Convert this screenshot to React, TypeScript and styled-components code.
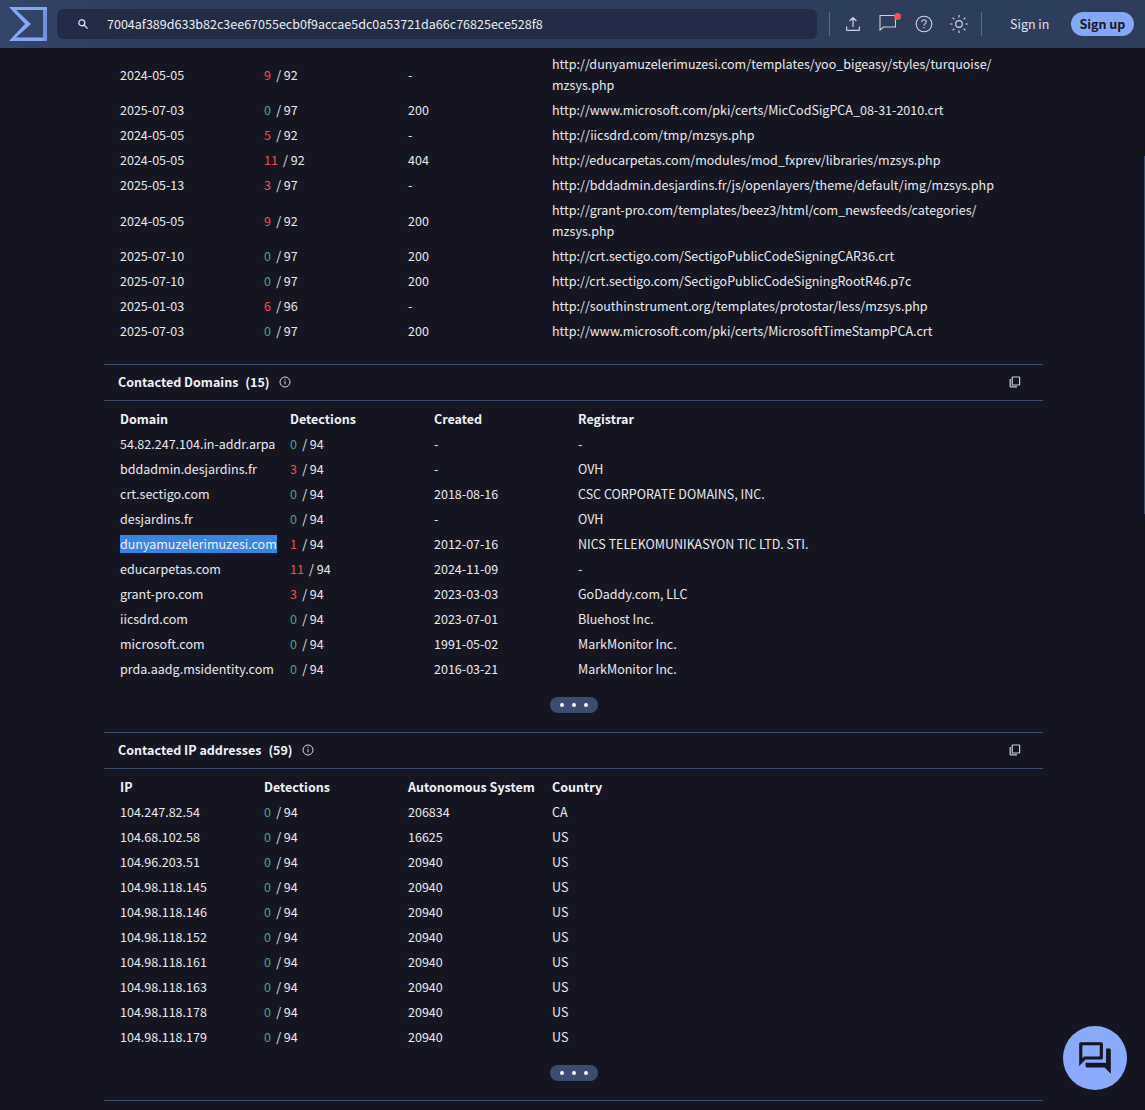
import React from "react";
import styled, { createGlobalStyle } from "styled-components";
import { MdOutlineQuestionAnswer } from "react-icons/md";

const GlobalStyle = createGlobalStyle`
  html, body {
    margin: 0;
    padding: 0;
    background: #161623;
    overflow: hidden;
  }
  body {
    font-family: "Noto Sans CJK JP", "Noto Sans", sans-serif;
    font-size: 12.52px;
    color: #e9e9ee;
  }
`;

type Detection = { hits: number; total: number };

const urls: [string, Detection, string, string][] = [
  ["2024-05-05", { hits: 9, total: 92 }, "-", "http://dunyamuzelerimuzesi.com/templates/yoo_bigeasy/styles/turquoise/\nmzsys.php"],
  ["2025-07-03", { hits: 0, total: 97 }, "200", "http://www.microsoft.com/pki/certs/MicCodSigPCA_08-31-2010.crt"],
  ["2024-05-05", { hits: 5, total: 92 }, "-", "http://iicsdrd.com/tmp/mzsys.php"],
  ["2024-05-05", { hits: 11, total: 92 }, "404", "http://educarpetas.com/modules/mod_fxprev/libraries/mzsys.php"],
  ["2025-05-13", { hits: 3, total: 97 }, "-", "http://bddadmin.desjardins.fr/js/openlayers/theme/default/img/mzsys.php"],
  ["2024-05-05", { hits: 9, total: 92 }, "200", "http://grant-pro.com/templates/beez3/html/com_newsfeeds/categories/\nmzsys.php"],
  ["2025-07-10", { hits: 0, total: 97 }, "200", "http://crt.sectigo.com/SectigoPublicCodeSigningCAR36.crt"],
  ["2025-07-10", { hits: 0, total: 97 }, "200", "http://crt.sectigo.com/SectigoPublicCodeSigningRootR46.p7c"],
  ["2025-01-03", { hits: 6, total: 96 }, "-", "http://southinstrument.org/templates/protostar/less/mzsys.php"],
  ["2025-07-03", { hits: 0, total: 97 }, "200", "http://www.microsoft.com/pki/certs/MicrosoftTimeStampPCA.crt"],
];

const domains: [string, number, string, string][] = [
  ["54.82.247.104.in-addr.arpa", 0, "-", "-"],
  ["bddadmin.desjardins.fr", 3, "-", "OVH"],
  ["crt.sectigo.com", 0, "2018-08-16", "CSC CORPORATE DOMAINS, INC."],
  ["desjardins.fr", 0, "-", "OVH"],
  ["dunyamuzelerimuzesi.com", 1, "2012-07-16", "NICS TELEKOMUNIKASYON TIC LTD. STI."],
  ["educarpetas.com", 11, "2024-11-09", "-"],
  ["grant-pro.com", 3, "2023-03-03", "GoDaddy.com, LLC"],
  ["iicsdrd.com", 0, "2023-07-01", "Bluehost Inc."],
  ["microsoft.com", 0, "1991-05-02", "MarkMonitor Inc."],
  ["prda.aadg.msidentity.com", 0, "2016-03-21", "MarkMonitor Inc."],
];

const ips: [string, string, string][] = [
  ["104.247.82.54", "206834", "CA"],
  ["104.68.102.58", "16625", "US"],
  ["104.96.203.51", "20940", "US"],
  ["104.98.118.145", "20940", "US"],
  ["104.98.118.146", "20940", "US"],
  ["104.98.118.152", "20940", "US"],
  ["104.98.118.161", "20940", "US"],
  ["104.98.118.163", "20940", "US"],
  ["104.98.118.178", "20940", "US"],
  ["104.98.118.179", "20940", "US"],
];

const Detections = ({ hits, total }: Detection) => (
  <span>
    <Hits $bad={hits > 0}>{hits}</Hits> / {total}
  </span>
);

const InfoIcon = () => (
  <svg width="12" height="12" viewBox="0 0 12 12" fill="none" stroke="#d5d7de" strokeWidth="1">
    <circle cx="6" cy="6" r="5" />
    <path d="M6 5.2v3.2M6 3.2v1" />
  </svg>
);

const CopyIcon = () => (
  <svg width="12" height="12" viewBox="0 0 12 12" fill="none" stroke="#c9ccd4" strokeWidth="1.2">
    <rect x="3.2" y="1" width="7.4" height="8" rx="0.6" />
    <path d="M1.2 3v7.2c0 .4.3.7.7.7H8" />
  </svg>
);

const App = () => {
  return (
    <>
      <GlobalStyle />
      <Header>
        <Logo width="38" height="34" viewBox="0 0 38 34">
          <path d="M0 0H38V34H0L16 17ZM7 3L22 17L7 30.5H34.3V3Z" fill="#85a7f8" fillRule="evenodd" />
          <path d="M34.3 3H38V34H34.3Z" fill="#7292e0" />
        </Logo>
        <Search>
          <svg width="12" height="12" viewBox="0 0 12 12" fill="none" stroke="#e6e8ee" strokeWidth="1.2">
            <circle cx="4.8" cy="4.8" r="3" />
            <path d="M7 7l3.6 3.6" />
          </svg>
          <SearchText>7004af389d633b82c3ee67055ecb0f9accae5dc0a53721da66c76825ece528f8</SearchText>
        </Search>
        <Divider />
        <Tools>
          <svg width="16" height="16" viewBox="0 0 16 16" fill="none" stroke="#ccd3e0" strokeWidth="1.2">
            <path d="M8 11V2M4.6 5L8 1.6 11.4 5M1.6 10.5v3.2c0 .4.3.7.7.7h11.4c.4 0 .7-.3.7-.7v-3.2" />
          </svg>
          <Bubble>
            <svg width="18" height="18" viewBox="0 0 18 18" fill="none" stroke="#ccd3e0" strokeWidth="1.1">
              <path d="M1 .5h15.5V12H4.5L1 15Z" />
            </svg>
            <Dot />
          </Bubble>
          <svg width="18" height="18" viewBox="0 0 18 18" fill="none" stroke="#ccd3e0" strokeWidth="1.1">
            <circle cx="9" cy="9" r="7.8" />
            <path d="M6.8 7c0-1.4 1-2.3 2.3-2.3s2.2.9 2.2 2.1c0 1.9-2.3 1.9-2.3 3.9M9 12v1.3" />
          </svg>
          <SunIcon width="20" height="20" viewBox="0 0 20 20" fill="none" stroke="#ccd3e0" strokeWidth="1.2">
            <circle cx="10" cy="10" r="3.3" />
            <path d="M10 1v2.6M10 16.4V19M1 10h2.6M16.4 10H19M3.6 3.6l1.8 1.8M14.6 14.6l1.8 1.8M3.6 16.4l1.8-1.8M14.6 5.4l1.8-1.8" />
          </SunIcon>
        </Tools>
        <Divider />
        <SignIn>Sign in</SignIn>
        <SignUp>Sign up</SignUp>
      </Header>

      <Page>
        <Rows>
          {urls.map(([date, det, status, url]) => (
            <Row key={url} $first="144px">
              <span>{date}</span>
              <Detections {...det} />
              <span>{status}</span>
              <Url>{url}</Url>
            </Row>
          ))}
        </Rows>

        <SectionHead>
          <Title>Contacted Domains</Title>
          <Count>(15)</Count>
          <InfoIcon />
          <CopyButton>
            <CopyIcon />
          </CopyButton>
        </SectionHead>
        <Rows>
          <HeadRow $first="170px">
            <span>Domain</span>
            <span>Detections</span>
            <span>Created</span>
            <span>Registrar</span>
          </HeadRow>
          {domains.map(([name, hits, created, registrar]) => (
            <Row key={name} $first="170px">
              {name === "dunyamuzelerimuzesi.com" ? <Selected>{name}</Selected> : <span>{name}</span>}
              <Detections hits={hits} total={94} />
              <span>{created}</span>
              <span>{registrar}</span>
            </Row>
          ))}
        </Rows>
        <More>
          <MoreDot />
          <MoreDot />
          <MoreDot />
        </More>

        <SectionHead>
          <Title>Contacted IP addresses</Title>
          <Count>(59)</Count>
          <InfoIcon />
          <CopyButton>
            <CopyIcon />
          </CopyButton>
        </SectionHead>
        <Rows>
          <HeadRow $first="144px">
            <span>IP</span>
            <span>Detections</span>
            <span>Autonomous System</span>
            <span>Country</span>
          </HeadRow>
          {ips.map(([ip, as, country]) => (
            <Row key={ip} $first="144px">
              <span>{ip}</span>
              <Detections hits={0} total={94} />
              <span>{as}</span>
              <span>{country}</span>
            </Row>
          ))}
        </Rows>
        <More>
          <MoreDot />
          <MoreDot />
          <MoreDot />
        </More>
        <LastLine />
      </Page>

      <ScrollThumb />
      <ChatButton>
        <MdOutlineQuestionAnswer size={38} color="#161623" />
      </ChatButton>
    </>
  );
};

const Header = styled.header`
  height: 48px;
  display: flex;
  align-items: center;
  background: linear-gradient(90deg, #33456a 0%, #2e3d5b 12%, #2e3d5b 100%);
  padding: 0 11px 0 9px;
  box-sizing: border-box;
`;

const Logo = styled.svg`
  flex: none;
  margin-right: 10px;
`;

const Search = styled.div`
  width: 760px;
  height: 30px;
  flex: none;
  display: flex;
  align-items: center;
  box-sizing: border-box;
  padding-left: 20px;
  background: #222c44;
  border-radius: 6px;
`;

const SearchText = styled.span`
  margin-left: 18px;
  margin-top: -2px;
  font-size: 12.52px;
  color: #eceef3;
`;

const Divider = styled.div`
  width: 1px;
  height: 24px;
  background: #5d6b87;
  flex: none;
  margin-left: 12px;
`;

const Tools = styled.div`
  display: flex;
  align-items: center;
  gap: 18px;
  margin-left: 15px;
  flex: none;
`;

const SunIcon = styled.svg`
  margin-left: -2px;
`;

const Bubble = styled.div`
  position: relative;
  display: flex;
`;

const Dot = styled.span`
  position: absolute;
  top: -2.5px;
  right: -3.5px;
  width: 7px;
  height: 7px;
  border-radius: 50%;
  background: #f5544e;
`;

const SignIn = styled.span`
  margin-left: 28px;
  margin-top: -1px;
  color: #dfe3ea;
  font-size: 12.5px;
  white-space: nowrap;
  flex: none;
`;

const SignUp = styled.span`
  margin-left: 22px;
  padding: 0 9px 0 8px;
  height: 24px;
  line-height: 23px;
  border-radius: 12px;
  background: #85a7f8;
  color: #161623;
  font-size: 12.5px;
  font-weight: 700;
  white-space: nowrap;
  flex: none;
`;

const Page = styled.main`
  width: 939px;
  margin-left: 104px;
  padding-top: 4px;
`;

const Rows = styled.div`
  display: flex;
  flex-direction: column;
`;

const Row = styled.div<{ $first: string }>`
  display: grid;
  grid-template-columns: ${(p) => p.$first} 144px 144px 1fr;
  align-items: center;
  box-sizing: border-box;
  min-height: 25px;
  padding: 1px 0 3px 16px;
  line-height: 21px;
`;

const HeadRow = styled(Row)`
  font-weight: 700;
  color: #f1f2f5;
`;

const Url = styled.span`
  white-space: pre-line;
`;

const Hits = styled.span<{ $bad: boolean }>`
  color: ${(p) => (p.$bad ? "#f04d4d" : "#4fa08f")};
  margin-right: 2.4px;
`;

const Selected = styled.span`
  justify-self: start;
  line-height: 18px;
  background: #3a84e2;
  color: #eef3fb;
`;

const SectionHead = styled.div`
  margin-top: 20px;
  height: 37px;
  box-sizing: border-box;
  display: flex;
  align-items: center;
  padding: 0 22px 2px 14px;
  border-top: 1px solid #3e4c6c;
  border-bottom: 1px solid #3e4c6c;
  margin-bottom: 6px;
`;

const Title = styled.span`
  font-weight: 700;
  color: #f1f2f5;
`;

const Count = styled.span`
  font-weight: 700;
  color: #f1f2f5;
  margin: 0 9px 0 7px;
`;

const CopyButton = styled.span`
  margin-left: auto;
  display: flex;
`;

const More = styled.div`
  width: 48px;
  height: 16px;
  margin: 15px auto -1px;
  border-radius: 8px;
  background: #3d4c6e;
  display: flex;
  align-items: center;
  justify-content: center;
  gap: 8px;
`;

const MoreDot = styled.span`
  width: 4px;
  height: 4px;
  border-radius: 50%;
  background: #fff;
`;

const LastLine = styled.div`
  margin-top: 20px;
  border-top: 1px solid #3e4c6c;
`;

const ScrollThumb = styled.div`
  position: fixed;
  right: 0;
  top: 156px;
  width: 1px;
  height: 358px;
  background: #3d4c6e;
`;

const ChatButton = styled.div`
  position: fixed;
  left: 1063px;
  top: 1026px;
  width: 64px;
  height: 64px;
  border-radius: 50%;
  background: #8aabfb;
  display: flex;
  align-items: center;
  justify-content: center;
`;

export default App;
